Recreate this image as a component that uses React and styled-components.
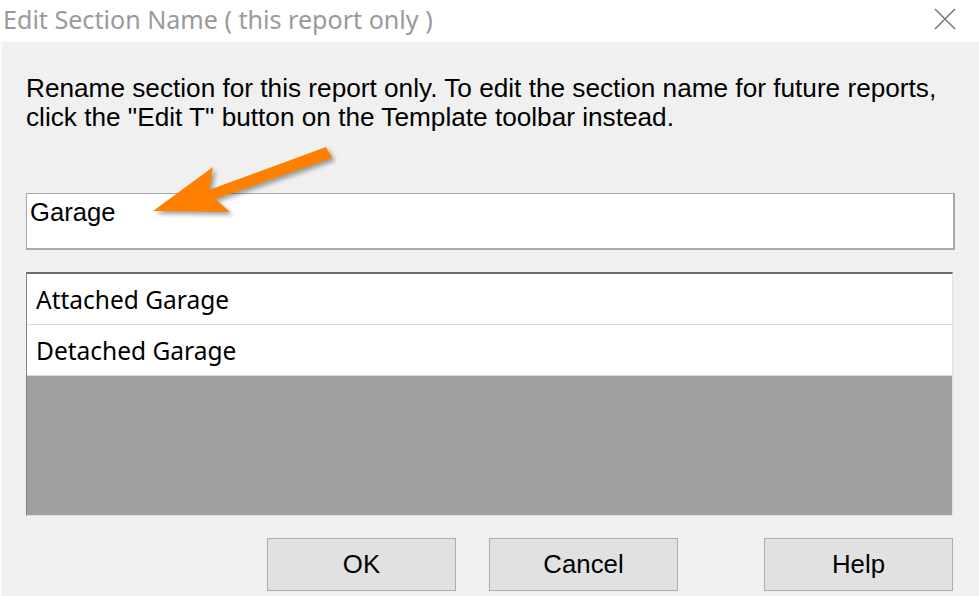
import React from "react";
import styled, { createGlobalStyle } from "styled-components";

const GlobalStyle = createGlobalStyle`
  html, body {
    margin: 0;
    padding: 0;
    background: #f0f0f0;
    overflow: hidden;
  }
`;

const Dialog = styled.div`
  width: 979px;
  height: 596px;
  display: flex;
  flex-direction: column;
  font-family: "Liberation Sans", Arial, sans-serif;
  color: #000;
`;

const TitleBar = styled.div`
  height: 42px;
  flex: none;
  background: #fff;
  display: flex;
  align-items: center;
  justify-content: space-between;
  padding: 0 22px 4px 3px;
  box-sizing: border-box;
`;

const Title = styled.span`
  font-family: "Noto Sans", "Open Sans", sans-serif;
  font-size: 25.1px;
  color: #9a9a9a;
`;

const CloseBtn = styled.div`
  width: 24px;
  height: 24px;
  display: flex;
  align-items: center;
  justify-content: center;
`;

const Body = styled.div`
  flex: 1;
  position: relative;
  background: #f0f0f0;
  border-left: 2px solid #fbfbfb;
  padding: 32px 24px 0 24px;
  display: flex;
  flex-direction: column;
`;

const Instructions = styled.p`
  margin: 0;
  font-size: 26.2px;
  line-height: 29px;
  white-space: nowrap;
`;

const NameInput = styled.div`
  margin-top: 61px;
  height: 57px;
  width: 929px;
  box-sizing: border-box;
  background: #fff;
  border: 2px solid #a9a9a9;
  border-width: 1px 2px 2px 1px;
  padding: 4px 3px;
  font-size: 25.6px;
  line-height: 29px;
`;

const ListBox = styled.div`
  margin-top: 22px;
  height: 244px;
  width: 927px;
  box-sizing: border-box;
  background: #a0a0a0;
  border-top: 2px solid #6e6e6e;
  border-left: 1px solid #828282;
  border-right: 1px solid #e3e3e3;
  border-bottom: 1px solid #e3e3e3;
  display: flex;
  flex-direction: column;
`;

const ListRow = styled.div`
  height: 51px;
  box-sizing: border-box;
  background: #fff;
  border-bottom: 1px solid #d9d9d9;
  display: flex;
  align-items: center;
  padding-left: 9px;
  font-family: "Noto Sans", "Open Sans", sans-serif;
  font-size: 24.5px;
`;

const ButtonRow = styled.div`
  margin-top: 22px;
  display: flex;
  padding-left: 241px;
`;

const Button = styled.div`
  width: 189px;
  height: 53px;
  box-sizing: border-box;
  margin-left: ${p => p.gap || 0}px;
  background: #e1e1e1;
  border: 1px solid #adadad;
  display: flex;
  align-items: center;
  justify-content: center;
  font-size: 25.8px;
`;

const Arrow = styled.svg`
  position: absolute;
  left: 118px;
  top: 90px;
  overflow: visible;
`;

const arrowPoints = "33,79 93,35 89,58 206,15 212,26 95,67 110,80";

export default function App() {
  return (
    <Dialog>
      <GlobalStyle />
      <TitleBar>
        <Title>Edit Section Name ( this report only )</Title>
        <CloseBtn>
          <svg width="22" height="22" viewBox="0 0 22 22">
            <path d="M1 1 L21 21 M21 1 L1 21" stroke="#7a7a7a" strokeWidth="1.6" fill="none" />
          </svg>
        </CloseBtn>
      </TitleBar>
      <Body>
        <Instructions>
          Rename section for this report only. To edit the section name for future reports,
          <br />
          click the "Edit T" button on the Template toolbar instead.
        </Instructions>
        <NameInput>Garage</NameInput>
        <ListBox>
          <ListRow>Attached Garage</ListRow>
          <ListRow>Detached Garage</ListRow>
        </ListBox>
        <ButtonRow>
          <Button>OK</Button>
          <Button gap={33}>Cancel</Button>
          <Button gap={86}>Help</Button>
        </ButtonRow>
        <Arrow width="240" height="120" viewBox="0 0 240 120">
          <defs>
            <filter id="sh" x="-20%" y="-20%" width="140%" height="140%">
              <feGaussianBlur stdDeviation="2" />
            </filter>
          </defs>
          <polygon points={arrowPoints} fill="#000" opacity="0.35" filter="url(#sh)" transform="translate(3,3)" />
          <polygon points={arrowPoints} fill="#ff8000" />
        </Arrow>
      </Body>
    </Dialog>
  );
}
